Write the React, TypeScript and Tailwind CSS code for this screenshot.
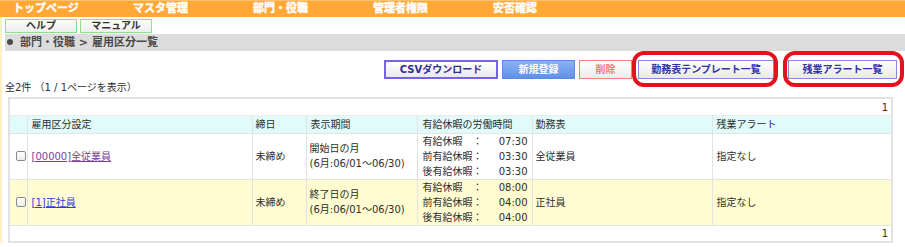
const navItems = ["トップページ", "マスタ管理", "部門・役職", "管理者権限", "安否確認"];

type Row = {
  code: string;
  name: string;
  visited: boolean;
  closing: string;
  period: string;
  times: [string, string][];
  sheet: string;
  alert: string;
  bg: string;
};

const rows: Row[] = [
  {
    code: "[00000]",
    name: "全従業員",
    visited: true,
    closing: "未締め",
    period: "開始日の月",
    times: [
      ["有給休暇　：", "07:30"],
      ["前有給休暇：", "03:30"],
      ["後有給休暇：", "03:30"],
    ],
    sheet: "全従業員",
    alert: "指定なし",
    bg: "bg-white",
  },
  {
    code: "[1]",
    name: "正社員",
    visited: false,
    closing: "未締め",
    period: "終了日の月",
    times: [
      ["有給休暇　：", "08:00"],
      ["前有給休暇：", "04:00"],
      ["後有給休暇：", "04:00"],
    ],
    sheet: "正社員",
    alert: "指定なし",
    bg: "bg-[#fffcd2]",
  },
];

function Checkbox() {
  return (
    <span className="block w-[10px] h-[10px] ml-[6px] rounded-[2px] border border-[#8a8a8a] bg-gradient-to-b from-white to-[#ececec]" />
  );
}

function HelpButton({ label }: { label: string }) {
  return (
    <div className="w-[72px] h-[14px] bg-gradient-to-b from-white to-[#ebebeb] shadow-[inset_0_0_0_1px_#86e386] text-center text-[10px] leading-[14px] font-bold text-[#333]">
      {label}
    </div>
  );
}

export default function App() {
  return (
    <div className="relative w-[905px] h-[247px] overflow-hidden bg-white text-[#2e2e2e] font-['DejaVu_Sans','Noto_Sans_CJK_JP',sans-serif]">
      {/* Top navigation */}
      <div className="flex h-[17px] bg-[#ffa836] border-t border-[#ffc26e]">
        {navItems.map((item) => (
          <div
            key={item}
            className="w-[120px] pl-[13px] text-[11px] leading-[16px] font-bold text-white [-webkit-text-stroke:0.4px_#fff]"
          >
            {item}
          </div>
        ))}
      </div>

      <div className="border-l-2 border-[#fff0c4]">
        {/* Help buttons */}
        <div className="flex gap-[3px] pl-[3px] pt-[2px]">
          <HelpButton label="ヘルプ" />
          <HelpButton label="マニュアル" />
        </div>

        {/* Breadcrumb */}
        <div className="ml-[3px] mt-[1px] h-[17px] bg-[#dcdcdc] flex items-center pl-[2px] text-[11px] leading-[17px] font-bold text-[#4a4a4a]">
          <span className="inline-block w-[6px] h-[6px] rounded-full bg-[#4a4a4a] mr-[7px] -mt-[1px]" />
          <span>部門・役職 &gt; 雇用区分一覧</span>
        </div>

        {/* Action buttons */}
        <div className="flex h-[19px] mt-[9px] pl-[382px] text-[10px] font-bold">
          <button className="w-[114px] h-[19px] border-2 border-[#7563ef] bg-gradient-to-b from-white to-[#e9e9e9] text-[#2f2f96]">
            CSVダウンロード
          </button>
          <button className="ml-[4px] w-[73px] h-[19px] border border-[#5b8be6] bg-gradient-to-b from-[#8db2f3] to-[#5f90ea] text-white">
            新規登録
          </button>
          <button className="ml-[4px] w-[53px] h-[19px] border border-[#f3846e] bg-gradient-to-b from-white to-[#ebebeb] text-[#f27a72]">
            削除
          </button>
          <button className="ml-[6px] w-[136px] h-[19px] border border-[#8c86e2] bg-gradient-to-b from-white to-[#e9e9e9] text-[#3232a2]">
            勤務表テンプレート一覧
          </button>
          <button className="ml-[14px] w-[109px] h-[19px] border border-[#8c86e2] bg-gradient-to-b from-white to-[#e9e9e9] text-[#3232a2]">
            残業アラート一覧
          </button>
        </div>

        {/* Count */}
        <div className="h-[14px] mt-[2px] pl-[3px] text-[10px] leading-[14px]">
          全2件 （1 / 1ページを表示）
        </div>

        {/* Table */}
        <div className="ml-[6px] mt-[2px] w-[885px] border-2 border-[#e2e2e2] text-[10px]">
          <div className="h-[17px] border-b border-[#ececec] text-right pr-[3px] leading-[17px]">1</div>
          <table className="w-full table-fixed border-collapse">
            <colgroup>
              <col className="w-[17px]" />
              <col className="w-[225px]" />
              <col className="w-[54px]" />
              <col className="w-[111px]" />
              <col className="w-[115px]" />
              <col className="w-[180px]" />
              <col className="w-[179px]" />
            </colgroup>
            <thead>
              <tr className="h-[17px] bg-[#e1fbfb] border-b border-[#e4e4e4]">
                <th className="font-normal" />
                <th className="font-normal text-left pl-[4px] border-l border-[#e2e2e2]">雇用区分設定</th>
                <th className="font-normal text-left pl-[3px] border-l border-[#e2e2e2]">締日</th>
                <th className="font-normal text-left pl-[4px] border-l border-[#e2e2e2]">表示期間</th>
                <th className="font-normal text-left pl-[5px] border-l border-[#e2e2e2]">有給休暇の労働時間</th>
                <th className="font-normal text-left pl-[3px] border-l border-[#e2e2e2]">勤務表</th>
                <th className="font-normal text-left pl-[4px] border-l border-[#e2e2e2]">残業アラート</th>
              </tr>
            </thead>
            <tbody>
              {rows.map((r) => (
                <tr key={r.code} className={`h-[46px] border-b border-[#e4e4e4] ${r.bg}`}>
                  <td className="align-middle">
                    <Checkbox />
                  </td>
                  <td className="pl-[4px] border-l border-[#e2e2e2]">
                    <a
                      href="#"
                      className={r.visited ? "underline text-[#7b3f98]" : "underline text-[#2b3be0]"}
                    >
                      {r.code}
                      {r.name}
                    </a>
                  </td>
                  <td className="pl-[3px] border-l border-[#e2e2e2]">{r.closing}</td>
                  <td className="pl-[3px] border-l border-[#e2e2e2] leading-[15px]">
                    <div>{r.period}</div>
                    <div>(6月:06/01～06/30)</div>
                  </td>
                  <td className="pl-[5px] pr-[4px] border-l border-[#e2e2e2] leading-[15px]">
                    {r.times.map(([label, time]) => (
                      <div key={label} className="flex justify-between">
                        <span>{label}</span>
                        <span>{time}</span>
                      </div>
                    ))}
                  </td>
                  <td className="pl-[3px] border-l border-[#e2e2e2]">{r.sheet}</td>
                  <td className="pl-[4px] border-l border-[#e2e2e2]">{r.alert}</td>
                </tr>
              ))}
            </tbody>
          </table>
          <div className="h-[15px] text-right pr-[3px] leading-[15px]">1</div>
        </div>
      </div>

      {/* Red annotation rings */}
      <div className="absolute left-[632px] top-[51px] w-[146px] h-[36px] border-[4px] border-[#e3121c] rounded-[12px]" />
      <div className="absolute left-[783px] top-[51px] w-[121px] h-[36px] border-[4px] border-[#e3121c] rounded-[12px]" />
    </div>
  );
}
